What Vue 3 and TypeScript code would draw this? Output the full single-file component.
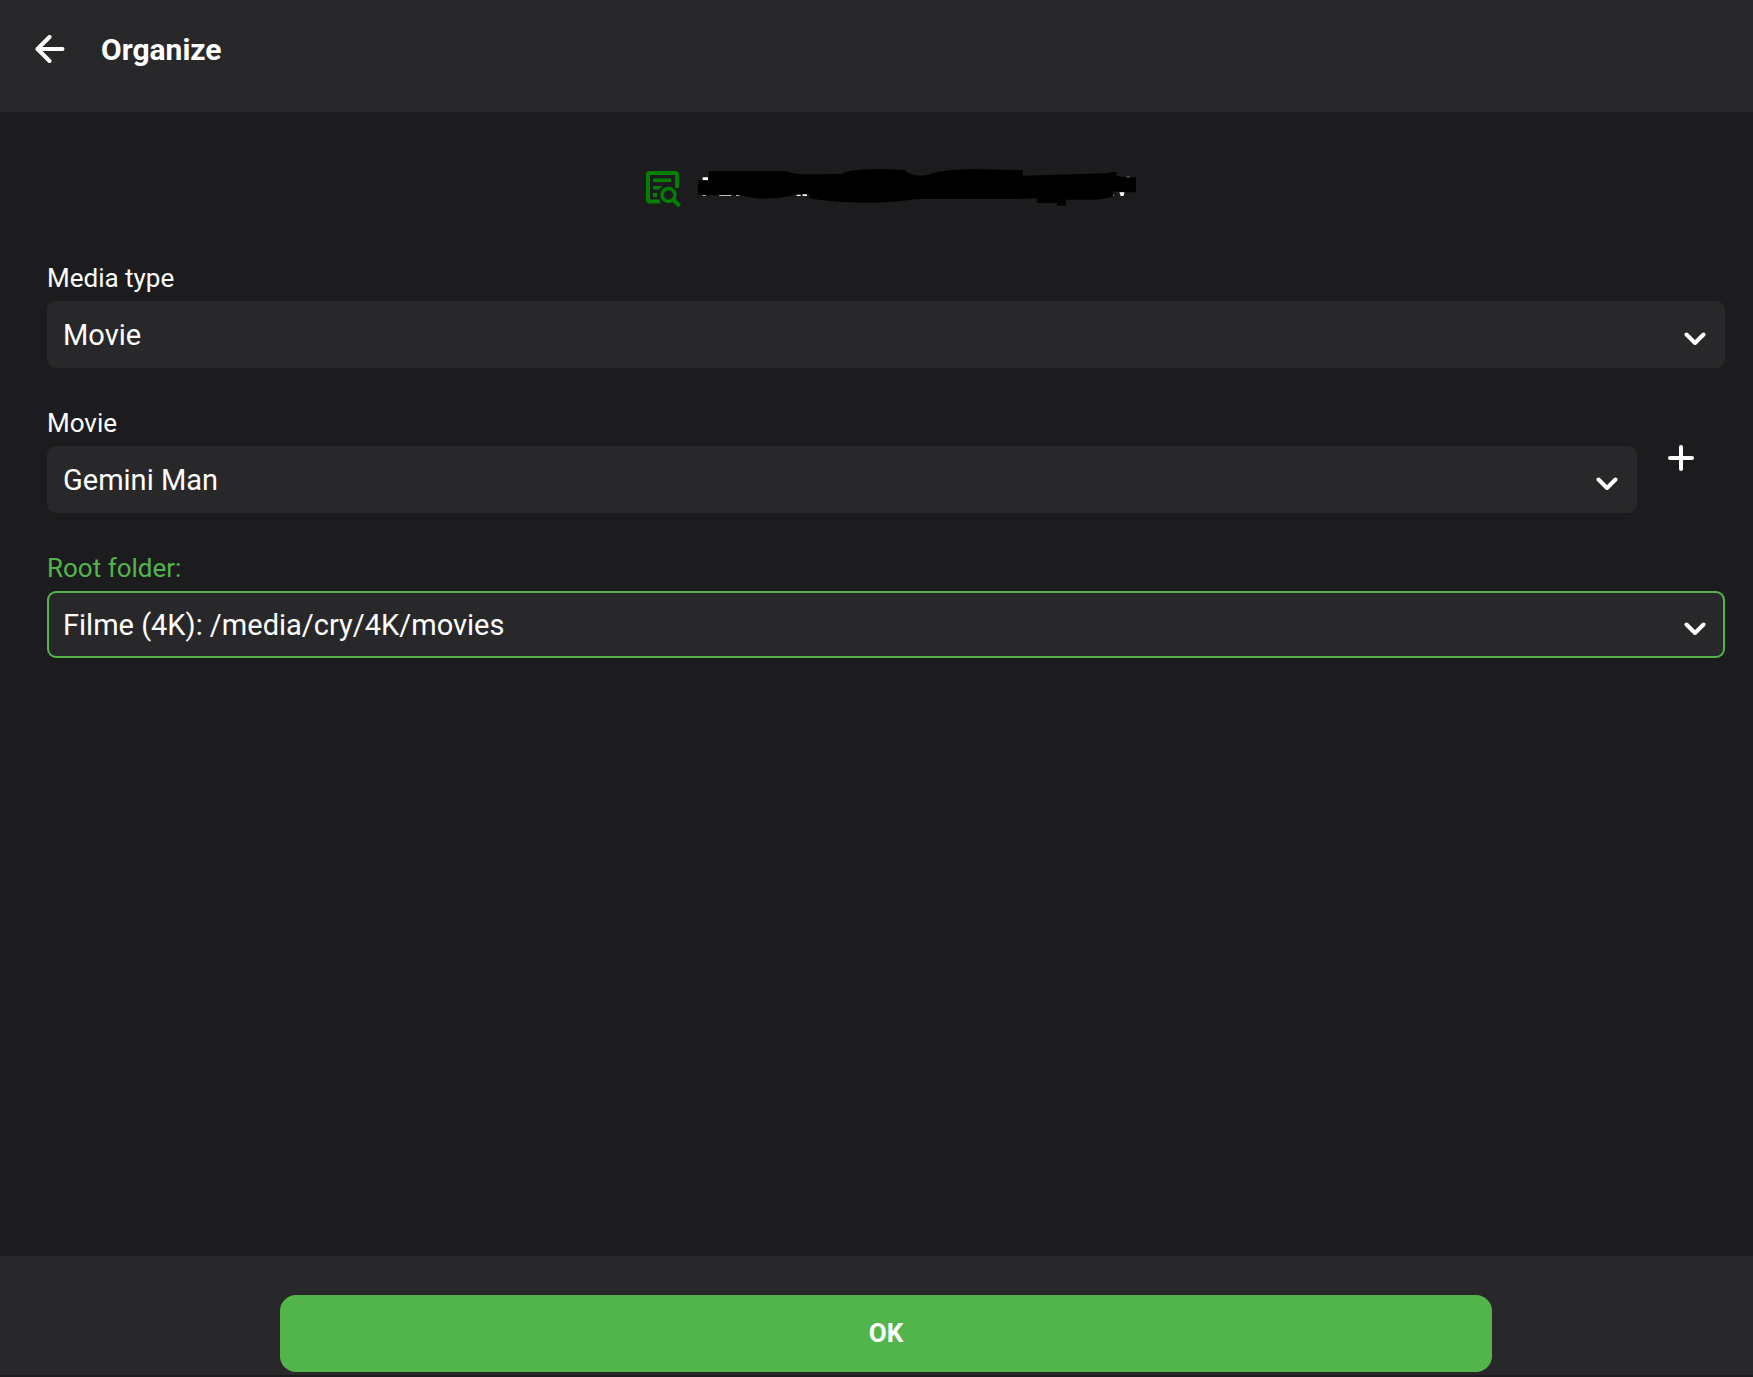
<script setup lang="ts">
import { ref } from 'vue'

interface Field {
  id: string
  label: string
  options: string[]
  active?: boolean
  addable?: boolean
}

const fields: Field[] = [
  { id: 'media-type', label: 'Media type', options: ['Movie'] },
  { id: 'movie', label: 'Movie', options: ['Gemini Man'], addable: true },
  { id: 'root-folder', label: 'Root folder:', options: ['Filme (4K): /media/cry/4K/movies'], active: true },
]

const values = ref<Record<string, string>>(
  Object.fromEntries(fields.map((field) => [field.id, field.options[0]])),
)
</script>

<template>
  <div class="page">
    <header class="topbar">
      <button class="icon-button back" type="button" aria-label="Back">
        <svg width="30" height="30" viewBox="0 0 30 30">
          <path d="M14.500 2 2.500 14l12 12M3 14h24.500" />
        </svg>
      </button>
      <h1>Organize</h1>
    </header>

    <form id="organize" class="content" @submit.prevent>
      <div class="file">
        <svg class="file-icon" width="36" height="42" viewBox="0 -4 36 42">
          <path d="M14 30.500H4Q2 30.500 2 28.500V4Q2 2 4 2H29Q31 2 31 4V17" fill="none" stroke="currentColor" stroke-width="4" />
          <path d="M7 7.500h18v3.500H7zM7 15h9l-3 3.500H7zM7 22h4v4H7z" fill="currentColor" />
          <circle cx="22.500" cy="24" r="6.500" fill="none" stroke="currentColor" stroke-width="3.500" />
          <path d="m27 28.500 6.500 6.500" fill="none" stroke="currentColor" stroke-width="4" />
        </svg>
        <svg class="file-name" width="440" height="42" viewBox="204 36 1320 126" aria-hidden="true">
          <path class="glint" d="M218 67h16v9h-16zM218 120h9v3h-9zM268 120h36v3h-36zM318 120h12v3h-12zM500 119h12v4h-12zM518 116h13v7h-13zM1468 112h16l-4 11h-8zM1449 120h3v3h-3zM1490 65h9v3h-9z" />
          <path d="M204 76H236V48H468C490 58 520 58 560 58L640 56C650 44 700 43 780 43L828 45 831 52C855 64 875 65 900 58 935 45 980 43 1040 43L1179 45V62L1430 55 1445 51H1460V63L1485 67H1518V112H1485L1450 109V126L1400 134H1308V152H1281V144H1221V130L1150 132H880C840 132 800 143 720 143 640 143 580 138 538 130V118H500C470 128 430 131 400 131 370 131 340 122 320 121H204Z" />
        </svg>
      </div>

      <div v-for="field in fields" :key="field.id" class="row">
        <div class="field" :class="{ active: field.active }">
          <label :for="field.id">{{ field.label }}</label>
          <div class="select">
            <select :id="field.id" v-model="values[field.id]">
              <option v-for="option in field.options" :key="option">{{ option }}</option>
            </select>
            <svg width="22" height="14" viewBox="0 0 22 14"><path d="m2.500 2.500 8.500 8.500 8.500-8.500" /></svg>
          </div>
        </div>
        <button v-if="field.addable" class="icon-button add" type="button" aria-label="Add movie">
          <svg width="28" height="28" viewBox="0 0 28 28"><path d="M14 3v22M3 14h22" /></svg>
        </button>
      </div>
    </form>

    <footer class="actions">
      <button class="submit" type="submit" form="organize">OK</button>
    </footer>
  </div>
</template>

<style>
body {
  margin: 0;
  background: #1c1c1e;
}
</style>

<style scoped>
.page {
  box-sizing: border-box;
  min-height: 100vh;
  display: flex;
  flex-direction: column;
  padding-bottom: 2px;
  background: #1c1c1e;
  color: #fff;
  font-family: Roboto, sans-serif;
}

.topbar {
  display: flex;
  align-items: center;
  gap: 36px;
  padding: 30px 35px 42px;
  background: #28282a;
}

h1 {
  margin: 0;
  font-size: 30px;
  line-height: 40px;
  font-weight: 700;
}

.icon-button {
  display: flex;
  padding: 0;
  border: 0;
  background: none;
  cursor: pointer;
}

.icon-button path,
.select path {
  fill: none;
  stroke: #fff;
  stroke-width: 4;
  stroke-linecap: round;
  stroke-linejoin: round;
}

.content {
  flex: 1;
  padding: 55px 28px 40px 47px;
}

.file {
  display: flex;
  align-items: center;
  justify-content: center;
  gap: 16px;
  height: 42px;
  margin-bottom: 53px;
  padding-left: 12px;
}

.file-icon {
  color: #008000;
}

.glint {
  fill: #fff;
}

.row {
  display: flex;
  align-items: center;
  gap: 30px;
  margin-bottom: 39px;
}

.field {
  flex: 1;
}

label {
  display: block;
  margin-bottom: 7px;
  font-size: 26px;
  line-height: 32px;
}

.select {
  position: relative;
}

select {
  display: block;
  width: 100%;
  height: 67px;
  padding: 0 60px 0 14px;
  border: 2px solid #28282a;
  border-radius: 9px;
  outline: 0;
  appearance: none;
  background: #28282a;
  color: #fff;
  font: 29px Roboto, sans-serif;
}

.select svg {
  position: absolute;
  top: 31px;
  right: 19px;
  pointer-events: none;
}

.active label {
  color: #52b54b;
}

.active select {
  border-color: #52b54b;
}

.add {
  margin-right: 30px;
  padding-bottom: 4px;
}

.actions {
  display: grid;
  grid-template-columns: 5fr 26fr 5fr;
  padding: 39px 28px 3px 47px;
  background: #28282a;
}

.submit {
  grid-column: 2;
  height: 77px;
  padding: 0 0 2px;
  border: 0;
  border-radius: 16px;
  background: #52b54b;
  color: #fff;
  font: 700 26px Roboto, sans-serif;
  cursor: pointer;
}
</style>
